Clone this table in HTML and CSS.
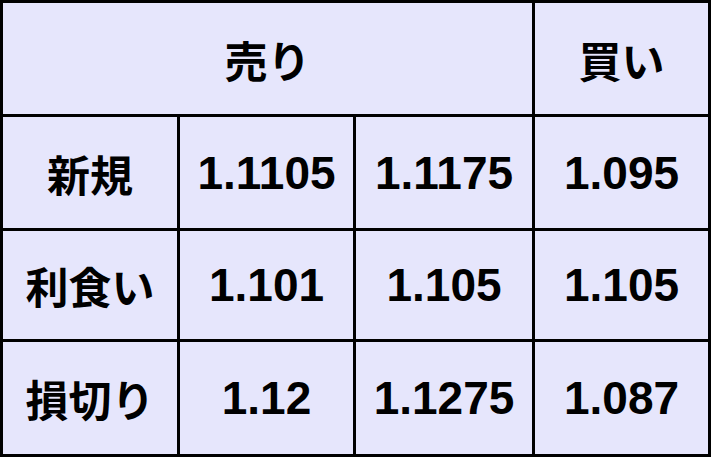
FILE: index.html
```html
<!DOCTYPE html>
<html lang="ja">
<head>
<meta charset="utf-8">
<link rel="stylesheet" href="styles.css">
</head>
<body>
<table class="grid">
  <colgroup>
    <col class="c1"><col class="c2"><col class="c3"><col class="c4">
  </colgroup>
  <tr class="r1">
    <td class="jp" colspan="3">売り</td>
    <td class="jp">買い</td>
  </tr>
  <tr class="r2">
    <td class="jp">新規</td>
    <td class="num">1.1105</td>
    <td class="num">1.1175</td>
    <td class="num">1.095</td>
  </tr>
  <tr class="r3">
    <td class="jp">利食い</td>
    <td class="num">1.101</td>
    <td class="num">1.105</td>
    <td class="num">1.105</td>
  </tr>
  <tr class="r4">
    <td class="jp">損切り</td>
    <td class="num">1.12</td>
    <td class="num">1.1275</td>
    <td class="num">1.087</td>
  </tr>
</table>
</body>
</html>
```
FILE: styles.css
```css
html, body {
  margin: 0;
  padding: 0;
  background: #000;
}
.grid {
  border-collapse: separate;
  border-spacing: 3px;
  background: #000;
  width: 711px;
  height: 457px;
  table-layout: fixed;
}
.c1 { width: 174px; }
.c2 { width: 173px; }
.c3 { width: 176px; }
.c4 { width: 173px; }
.r1 td { height: 111px; }
.r2 td { height: 111px; }
.r3 td { height: 108px; }
.r4 td { height: 112px; }
.grid td {
  background: #e6e6fc;
  color: #000;
  text-align: center;
  vertical-align: middle;
  padding: 0;
  font-weight: 700;
  white-space: nowrap;
}
.num {
  font-family: "Liberation Sans", Arial, sans-serif;
  font-size: 46px;
}
.grid td.jp {
  font-family: "Noto Sans CJK JP", "Noto Sans", sans-serif;
  font-size: 43px;
  font-weight: 700;
}
```
